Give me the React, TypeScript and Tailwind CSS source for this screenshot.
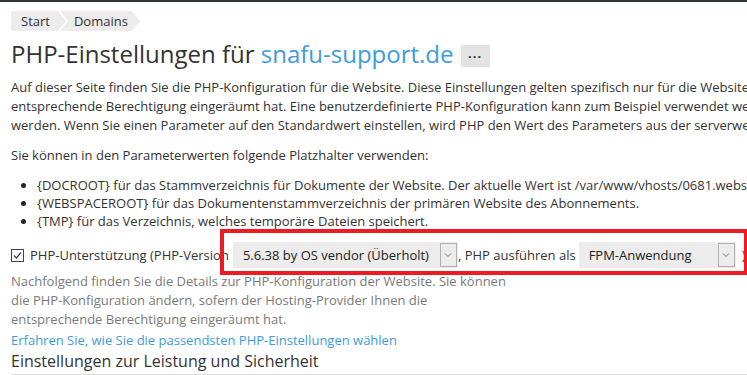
import React from "react";

const font = { fontFamily: '"Open Sans", "Noto Sans", sans-serif' };

function Chevron() {
  return (
    <svg width="10" height="10" viewBox="0 0 10 10" className="text-[#777]">
      <path d="M2 3.5 L5 6.5 L8 3.5" fill="none" stroke="currentColor" strokeWidth="1" />
    </svg>
  );
}

export default function App() {
  return (
    <div className="w-[747px] h-[375px] overflow-hidden bg-white text-[#333] text-[13px] leading-[19px]" style={font}>
      <div className="h-[2px] bg-[#2f3437]" />
      <div className="pl-[11px] pt-[9px] w-[1100px]">
        {/* breadcrumb */}
        <div className="flex h-[20px] text-[13px] leading-[20px] text-[#333]">
          <div className="bg-[#ececec] pl-[10px] pr-[16px] [clip-path:polygon(0_0,calc(100%-8px)_0,100%_50%,calc(100%-8px)_100%,0_100%)]">Start</div>
          <div className="-ml-[6px] bg-[#ececec] pl-[14px] pr-[12px] [clip-path:polygon(0_0,calc(100%-8px)_0,100%_50%,calc(100%-8px)_100%,0_100%,8px_50%)]">Domains</div>
        </div>
        {/* title */}
        <div className="mt-[6px] flex items-center h-[34px]">
          <h1 className="text-[24px] leading-[34px] text-[#333] whitespace-nowrap">
            PHP-Einstellungen für <span className="text-[#3d9be0]">snafu-support.de</span>
          </h1>
          <div className="ml-[7px] mt-[4px] w-[29px] h-[22px] bg-[#e3e3e3] flex items-center justify-center text-[13px] leading-none font-bold tracking-[1px] text-[#333]">
            <span className="-mt-[6px]">...</span>
          </div>
        </div>
        {/* intro */}
        <p className="mt-[7px] whitespace-nowrap">
          Auf dieser Seite finden Sie die PHP-Konfiguration für die Website. Diese Einstellungen gelten spezifisch nur für die Website, sofern der Hosting-Provider Ihnen die
          <br />
          entsprechende Berechtigung eingeräumt hat. Eine benutzerdefinierte PHP-Konfiguration kann zum Beispiel verwendet we
          <br />
          werden. Wenn Sie einen Parameter auf den Standardwert einstellen, wird PHP den Wert des Parameters aus der serverweiten Konfiguration verwenden.
        </p>
        <p className="mt-[11px] whitespace-nowrap">Sie können in den Parameterwerten folgende Platzhalter verwenden:</p>
        <ul className="mt-[11px] whitespace-nowrap">
          <li className="flex items-center h-[18px]"><span className="w-[5px] h-[5px] rounded-full bg-[#222] ml-[10px] mr-[11px]" />{"{DOCROOT}"} für das Stammverzeichnis für Dokumente der Website. Der aktuelle Wert ist /var/www/vhosts/0681.website/httpdocs</li>
          <li className="flex items-center h-[18px]"><span className="w-[5px] h-[5px] rounded-full bg-[#222] ml-[10px] mr-[11px]" />{"{WEBSPACEROOT}"} für das Dokumentenstammverzeichnis der primären Website des Abonnements.</li>
          <li className="flex items-center h-[18px]"><span className="w-[5px] h-[5px] rounded-full bg-[#222] ml-[10px] mr-[11px]" />{"{TMP}"} für das Verzeichnis, welches temporäre Dateien speichert.</li>
        </ul>
        {/* php support row */}
        <div className="relative mt-[12px] flex items-center h-[26px] whitespace-nowrap">
          <div className="absolute left-[209px] -top-[13px] w-[528px] h-[46px] border-[4px] border-[#ed1c24] pointer-events-none" />
          <span className="w-[13px] h-[13px] border border-[#444] flex items-center justify-center">
            <svg width="11" height="11" viewBox="0 0 11 11"><path d="M2 5.5 L4.5 8 L9 2.5" fill="none" stroke="#444" strokeWidth="1.3" /></svg>
          </span>
          <span className="ml-[6px]">PHP-Unterstützung (PHP-Version</span>
          <div className="ml-[4px] w-[225px] h-[26px] bg-[#ececec] flex items-center justify-between">
            <span className="pl-[10px] text-[#222]">5.6.38 by OS vendor (Überholt)</span>
            <span className="w-[17px] h-[24px] border border-[#b0b0b0] bg-[#ececec] flex items-center justify-center mr-[1px]"><Chevron /></span>
          </div>
          <span>, PHP ausführen als</span>
          <div className="ml-[3px] w-[157px] h-[26px] bg-[#ececec] flex items-center justify-between">
            <span className="pl-[10px] text-[#222]">FPM-Anwendung</span>
            <span className="w-[17px] h-[24px] border border-[#b0b0b0] bg-[#ececec] flex items-center justify-center mr-[1px]"><Chevron /></span>
          </div>
          <span className="ml-[6px]">)</span>
        </div>
        <p className="mt-[4px] w-[500px] text-[#7a7a7a]">
          Nachfolgend finden Sie die Details zur PHP-Konfiguration der Website. Sie können die PHP-Konfiguration ändern, sofern der Hosting-Provider Ihnen die entsprechende Berechtigung eingeräumt hat.
        </p>
        <a className="block mt-[2px] text-[#3d9be0]">Erfahren Sie, wie Sie die passendsten PHP-Einstellungen wählen</a>
        <div className="w-[736px] border-b border-[#dcdcdc] text-[16px] leading-[22px] pb-[2px] text-[#333]">Einstellungen zur Leistung und Sicherheit</div>
      </div>
    </div>
  );
}
